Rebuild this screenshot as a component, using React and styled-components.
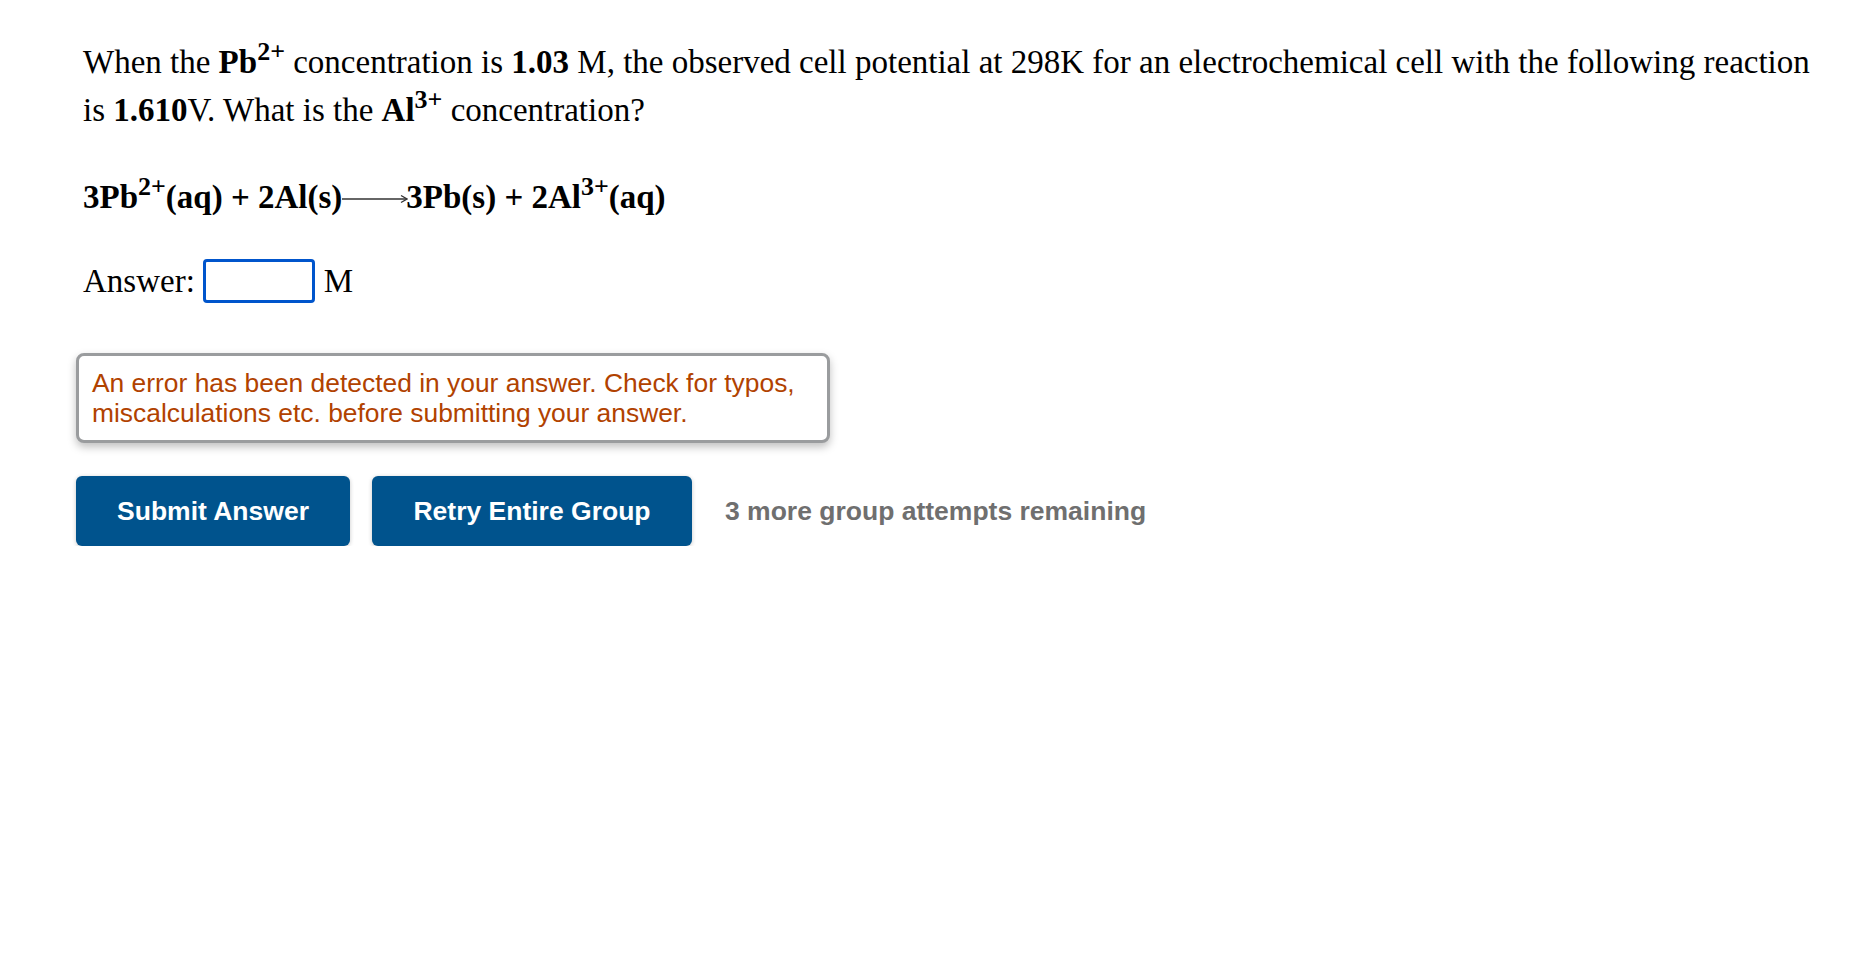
import React from 'react';
import styled, { createGlobalStyle } from 'styled-components';

const GlobalStyle = createGlobalStyle`
  html, body {
    margin: 0;
    padding: 0;
    background: #ffffff;
  }
`;

const Page = styled.div`
  padding: 38px 40px 0 76px;
  font-family: "Liberation Serif", "Times New Roman", serif;
  color: #000;
`;

const Question = styled.p`
  margin: 0 0 0 7px;
  font-size: 33px;
  line-height: 48px;
`;

const Sup = styled.sup`
  font-size: 26px;
  font-weight: 700;
  line-height: 0;
  vertical-align: 13px;
`;

const Equation = styled.div`
  margin: 39px 0 0 7px;
  font-size: 33px;
  line-height: 48px;
  font-weight: 700;
  display: flex;
  align-items: baseline;
  white-space: pre;
`;

const Arrow = styled.svg`
  width: 66px;
  height: 10px;
  margin-right: -2px;
  align-self: center;
  position: relative;
  top: 2px;
`;

const AnswerRow = styled.div`
  margin: 36px 0 0 7px;
  display: flex;
  align-items: center;
  font-size: 33px;
  line-height: 48px;
  height: 48px;
`;

const AnswerInput = styled.input`
  box-sizing: border-box;
  width: 112px;
  height: 44px;
  margin: 0 9px 0 8px;
  border: 3px solid #0055cc;
  border-radius: 4px;
  outline: none;
  background: #fff;
`;

const ErrorBox = styled.div`
  box-sizing: border-box;
  width: 754px;
  margin-top: 48px;
  padding: 12px 13px 12px;
  border: 3px solid #9a9c9e;
  border-radius: 8px;
  background: #fff;
  box-shadow: 0 4px 8px rgba(0, 0, 0, 0.25);
  font-family: "Liberation Sans", Arial, sans-serif;
  font-size: 26.4px;
  line-height: 30px;
  color: #b14200;
`;

const Actions = styled.div`
  margin-top: 33px;
  display: flex;
  align-items: center;
  gap: 22px;
  font-family: "Liberation Sans", Arial, sans-serif;
`;

const Button = styled.button`
  box-sizing: border-box;
  width: ${(p) => p.$w}px;
  height: 70px;
  border: none;
  border-radius: 6px;
  background: #00538d;
  color: #fff;
  font-family: "Liberation Sans", Arial, sans-serif;
  font-size: 26.5px;
  font-weight: 700;
  box-shadow: 0 1px 4px rgba(0, 0, 0, 0.22);
  cursor: pointer;
`;

const Attempts = styled.span`
  margin-left: 11px;
  font-size: 26.5px;
  font-weight: 700;
  color: #6f6f6f;
`;

export default function App() {
  return (
    <>
      <GlobalStyle />
      <Page>
        <Question>
          When the <b>Pb<Sup>2+</Sup></b> concentration is <b>1.03</b> M, the observed cell potential at 298K for an
          electrochemical cell with the following reaction is <b>1.610</b>V. What is the <b>Al<Sup>3+</Sup></b> concentration?
        </Question>

        <Equation>
          <span>3Pb<Sup>2+</Sup>(aq) + 2Al(s)</span>
          <Arrow viewBox="0 0 66 10">
            <line x1="0" y1="5" x2="64" y2="5" stroke="#333" strokeWidth="1.6" />
            <path d="M59 1.5 L65 5 L59 8.5" fill="none" stroke="#333" strokeWidth="1.3" />
          </Arrow>
          <span>3Pb(s) + 2Al<Sup>3+</Sup>(aq)</span>
        </Equation>

        <AnswerRow>
          Answer:
          <AnswerInput type="text" />
          M
        </AnswerRow>

        <ErrorBox>
          An error has been detected in your answer. Check for typos,
          <br />
          miscalculations etc. before submitting your answer.
        </ErrorBox>

        <Actions>
          <Button $w={274}>Submit Answer</Button>
          <Button $w={320}>Retry Entire Group</Button>
          <Attempts>3 more group attempts remaining</Attempts>
        </Actions>
      </Page>
    </>
  );
}
